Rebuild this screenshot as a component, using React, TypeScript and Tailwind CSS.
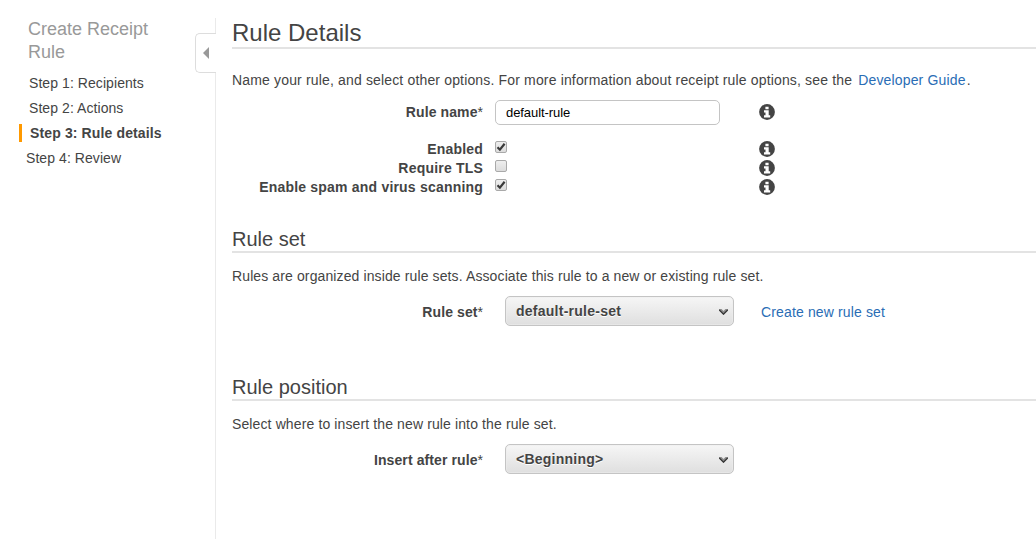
import React from "react";

function Heading({ children, large = false }: { children: React.ReactNode; large?: boolean }) {
  return (
    <h2
      className={
        large
          ? "h-[30px] border-b-2 border-[#e3e3e3] text-[24px] leading-[28px]"
          : "h-[26px] border-b-2 border-[#e3e3e3] text-[20px] leading-[24px]"
      }
    >
      {children}
    </h2>
  );
}

function Label({ children, required = false }: { children: React.ReactNode; required?: boolean }) {
  return (
    <div
      className={
        required
          ? "w-[251px] shrink-0 text-right font-bold whitespace-nowrap tracking-[0.1px]"
          : "w-[251px] shrink-0 text-right font-bold whitespace-nowrap tracking-[0.2px]"
      }
    >
      {children}
      {required && <span className="font-normal tracking-normal">*</span>}
    </div>
  );
}

function Info() {
  return (
    <svg viewBox="0 0 16 16" className="block size-4 shrink-0">
      <circle cx="8" cy="8" r="7.9" fill="#444" />
      <path d="M6.4 2.7h3.2v2.6h-3.2z M5 6.3h4.7v4.9h1.5v2.2h-6.2v-2.2h1.5v-2.8h-1.5z" fill="#fff" />
    </svg>
  );
}

function CheckRow({ label, checked = false }: { label: string; checked?: boolean }) {
  return (
    <div className="flex h-[19px] items-start">
      <Label>{label}</Label>
      <div className="ml-3 mt-px size-3 shrink-0 rounded-[2px] border border-[#a9a9a9] bg-linear-to-b from-[#eee] to-[#dcdcdc]">
        {checked && (
          <svg viewBox="0 0 10 10" className="block size-[10px]">
            <path d="M1.5 5.2 L3.9 7.7 L8.6 1.8" fill="none" stroke="#3a3a3a" strokeWidth="2.2" />
          </svg>
        )}
      </div>
      <div className="ml-[252px] mt-px">
        <Info />
      </div>
    </div>
  );
}

function Select({ value }: { value: string }) {
  return (
    <button className="ml-[22px] flex h-[30px] w-[229px] shrink-0 items-center justify-between rounded-[5px] border border-[#c4c4c4] bg-linear-to-b from-[#f6f6f6] to-[#dfdfdf] pl-[10px] pr-[5px] font-bold tracking-[0.25px] inset-shadow-[0_0_0_1px_#eeeeee80]">
      <span className="-mt-px [text-shadow:0_1px_0_#fff]">{value}</span>
      <svg viewBox="0 0 9 6" className="mt-[2px] h-[6px] w-[9px]">
        <path d="M0 0 H2.5 L4.5 2 L6.5 0 H9 V1.5 L4.5 6 L0 1.5 Z" fill="#8c8c8c" />
        <path d="M0.3 1 L4.5 5.2 L8.7 1" fill="none" stroke="#333" strokeWidth="1.1" />
      </svg>
    </button>
  );
}

export default function App() {
  return (
    <div className="flex h-[539px] w-[1036px] overflow-hidden bg-white pt-[18px] font-['Liberation_Sans',Arial,sans-serif] text-[14px] leading-[20px] text-[#444]">
      <aside className="flex w-[216px] shrink-0 border-r border-[#eaeaea]">
        <nav className="w-[195px] shrink-0">
          <h1 className="pl-[28px] text-[18px] leading-[23px] text-[#999]">
            Create Receipt
            <br />
            Rule
          </h1>
          <ul className="mt-[7px] leading-[25px] tracking-[0.07px] whitespace-nowrap">
            <li className="pl-[29px]">Step 1: Recipients</li>
            <li className="pl-[29px]">Step 2: Actions</li>
            <li className="flex items-center pl-[19px] font-bold tracking-[0.13px]">
              <span className="mr-2 mb-px h-[18px] w-[3px] bg-[#f90]" />
              Step 3: Rule details
            </li>
            <li className="pl-[26px]">Step 4: Review</li>
          </ul>
        </nav>
        <button className="-mr-px mt-[15px] flex h-10 w-[21px] shrink-0 items-center rounded-l-[5px] border border-r-0 border-[#ddd] bg-white pl-[7px]">
          <svg viewBox="0 0 6 12" className="h-3 w-[6px]">
            <path d="M6 0 V12 L0 6 Z" fill="#999" />
          </svg>
        </button>
      </aside>
      <main className="min-w-0 flex-1 pl-4 pt-px">
        <section>
          <Heading large>Rule Details</Heading>
          <p className="mt-[21px] whitespace-nowrap tracking-[0.158px]">
            Name your rule, and select other options. For more information about receipt rule options, see the{" "}
            <a className="ml-[2px] text-[#2a6db5]">Developer Guide</a>
            <span className="ml-px">.</span>
          </p>
          <div className="mt-[10px] flex h-[25px] items-start">
            <div className="mt-[2px]">
              <Label required>Rule name</Label>
            </div>
            <input
              defaultValue="default-rule"
              className="ml-3 h-[25px] w-[225px] rounded-[5px] border border-[#c4c4c4] px-[10px] text-[13px] tracking-[-0.07px] text-black outline-none"
            />
            <div className="ml-[39px] mt-1">
              <Info />
            </div>
          </div>
          <div className="mt-[15px] leading-[19px]">
            <CheckRow label="Enabled" checked />
            <CheckRow label="Require TLS" />
            <CheckRow label="Enable spam and virus scanning" checked />
          </div>
        </section>
        <section className="mt-[30px]">
          <Heading>Rule set</Heading>
          <p className="mt-[13px] tracking-[0.115px]">
            Rules are organized inside rule sets. Associate this rule to a new or existing rule set.
          </p>
          <div className="mt-[10px] flex h-[30px] items-center">
            <div className="mt-[2px]">
              <Label required>Rule set</Label>
            </div>
            <Select value="default-rule-set" />
            <a className="ml-[27px] mt-[2px] tracking-[0.14px] text-[#2a6db5]">Create new rule set</a>
          </div>
        </section>
        <section className="mt-[49px]">
          <Heading>Rule position</Heading>
          <p className="mt-[13px] tracking-[0.12px]">Select where to insert the new rule into the rule set.</p>
          <div className="mt-[10px] flex h-[30px] items-center">
            <div className="mt-[2px]">
              <Label required>Insert after rule</Label>
            </div>
            <Select value="<Beginning>" />
          </div>
        </section>
      </main>
    </div>
  );
}
